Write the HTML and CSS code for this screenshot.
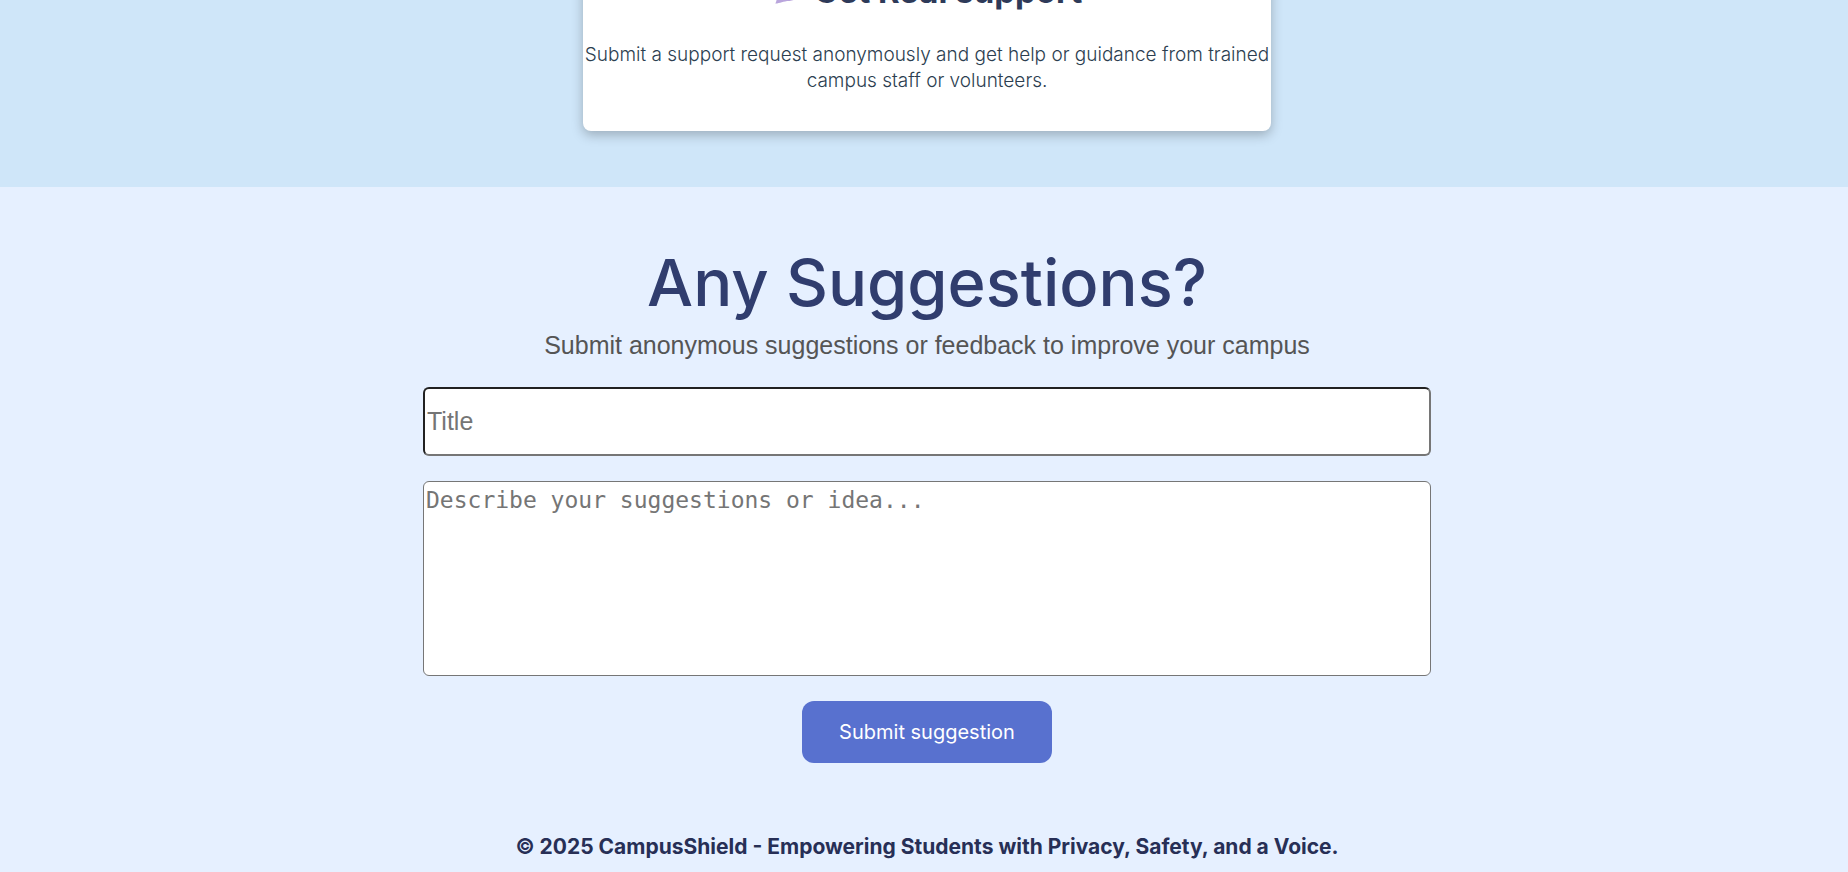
FILE: index.html
```html
<!DOCTYPE html>
<html lang="en">
<head>
<meta charset="utf-8">
<title>CampusShield</title>
<link rel="stylesheet" href="styles.css">
</head>
<body>
<section class="features">
  <article class="card">
    <h2 class="card-title">
      <svg class="card-icon" viewBox="0 0 36 36" aria-hidden="true"><path d="M18 0C8 0 1 6 1 14c0 5 2 9 5 11 0 3-1 6-2 8 6 0 9-3 17-3 9-1 14-7 14-15S28 0 18 0z" fill="#b9a5dc"/></svg>
      Get Real support
    </h2>
    <p class="card-text">Submit a support request anonymously and get help or guidance from trained campus staff or volunteers.</p>
  </article>
</section>
<main class="suggestions">
  <h1 class="heading">Any Suggestions?</h1>
  <p class="subtitle">Submit anonymous suggestions or feedback to improve your campus</p>
  <form class="form">
    <input class="field title-field" type="text" placeholder="Title" aria-label="Title">
    <textarea class="field idea-field" placeholder="Describe your suggestions or idea..." aria-label="Describe your suggestions or idea"></textarea>
    <button class="submit" type="button">Submit suggestion</button>
  </form>
</main>
<footer class="footer">© 2025 CampusShield - Empowering Students with Privacy, Safety, and a Voice.</footer>
</body>
</html>
```
FILE: styles.css
```css
* { box-sizing: border-box; }
body {
  margin: 0;
  background: #e6f0ff;
  font-family: "Inter", sans-serif;
}
.features {
  display: flex;
  justify-content: center;
  overflow: hidden;
  padding: 0 0 56px 6px;
  background: #cfe6f9;
}
.card {
  width: 688px;
  max-width: 100%;
  margin-top: -53px;
  padding: 24px 0 37px;
  border-radius: 8px;
  background: #fff;
  box-shadow: 0 4px 12px rgba(0, 0, 0, 0.25);
  color: #2e3a59;
  text-align: center;
}
.card-title {
  display: flex;
  justify-content: center;
  align-items: center;
  gap: 12px;
  margin: 0 0 31px;
  font: 700 33px/40px "Inter", sans-serif;
}
.card-icon { width: 30px; height: 30px; }
.card-text {
  margin: 0;
  color: #2c3e50;
  font: 300 19px/26px "Inter", sans-serif;
}
.suggestions {
  padding: 48px 0 0 6px;
  text-align: center;
}
.heading {
  margin: 0;
  color: #303d6e;
  font: 500 65px/96px "Inter", sans-serif;
}
.subtitle {
  margin: 0 0 27px;
  color: #555;
  font: 400 25px/29px "Liberation Sans", sans-serif;
}
.form {
  display: flex;
  flex-direction: column;
  align-items: center;
  gap: 25px;
}
.field {
  width: 1008px;
  max-width: 100%;
  border-radius: 6px;
  background: #fff;
  outline: none;
}
.field::placeholder { color: #757575; opacity: 1; }
.title-field {
  height: 69px;
  padding: 1px 2px;
  border: 2px solid;
  border-color: #212121 #767676 #767676 #212121;
  font: 25px "Liberation Sans", sans-serif;
}
.idea-field {
  height: 195px;
  padding: 4px 2px;
  border: 1px solid #767676;
  font: 23px/28px "DejaVu Sans Mono", monospace;
  resize: none;
}
.submit {
  padding: 16px 37px;
  border: 0;
  border-radius: 12px;
  background: #5871cf;
  color: #fff;
  font: 400 20px/30px "Inter", sans-serif;
}
.footer {
  padding: 68px 0 8px 6px;
  color: #272f56;
  font: 700 21px/32px "Inter", sans-serif;
  text-align: center;
}
```
